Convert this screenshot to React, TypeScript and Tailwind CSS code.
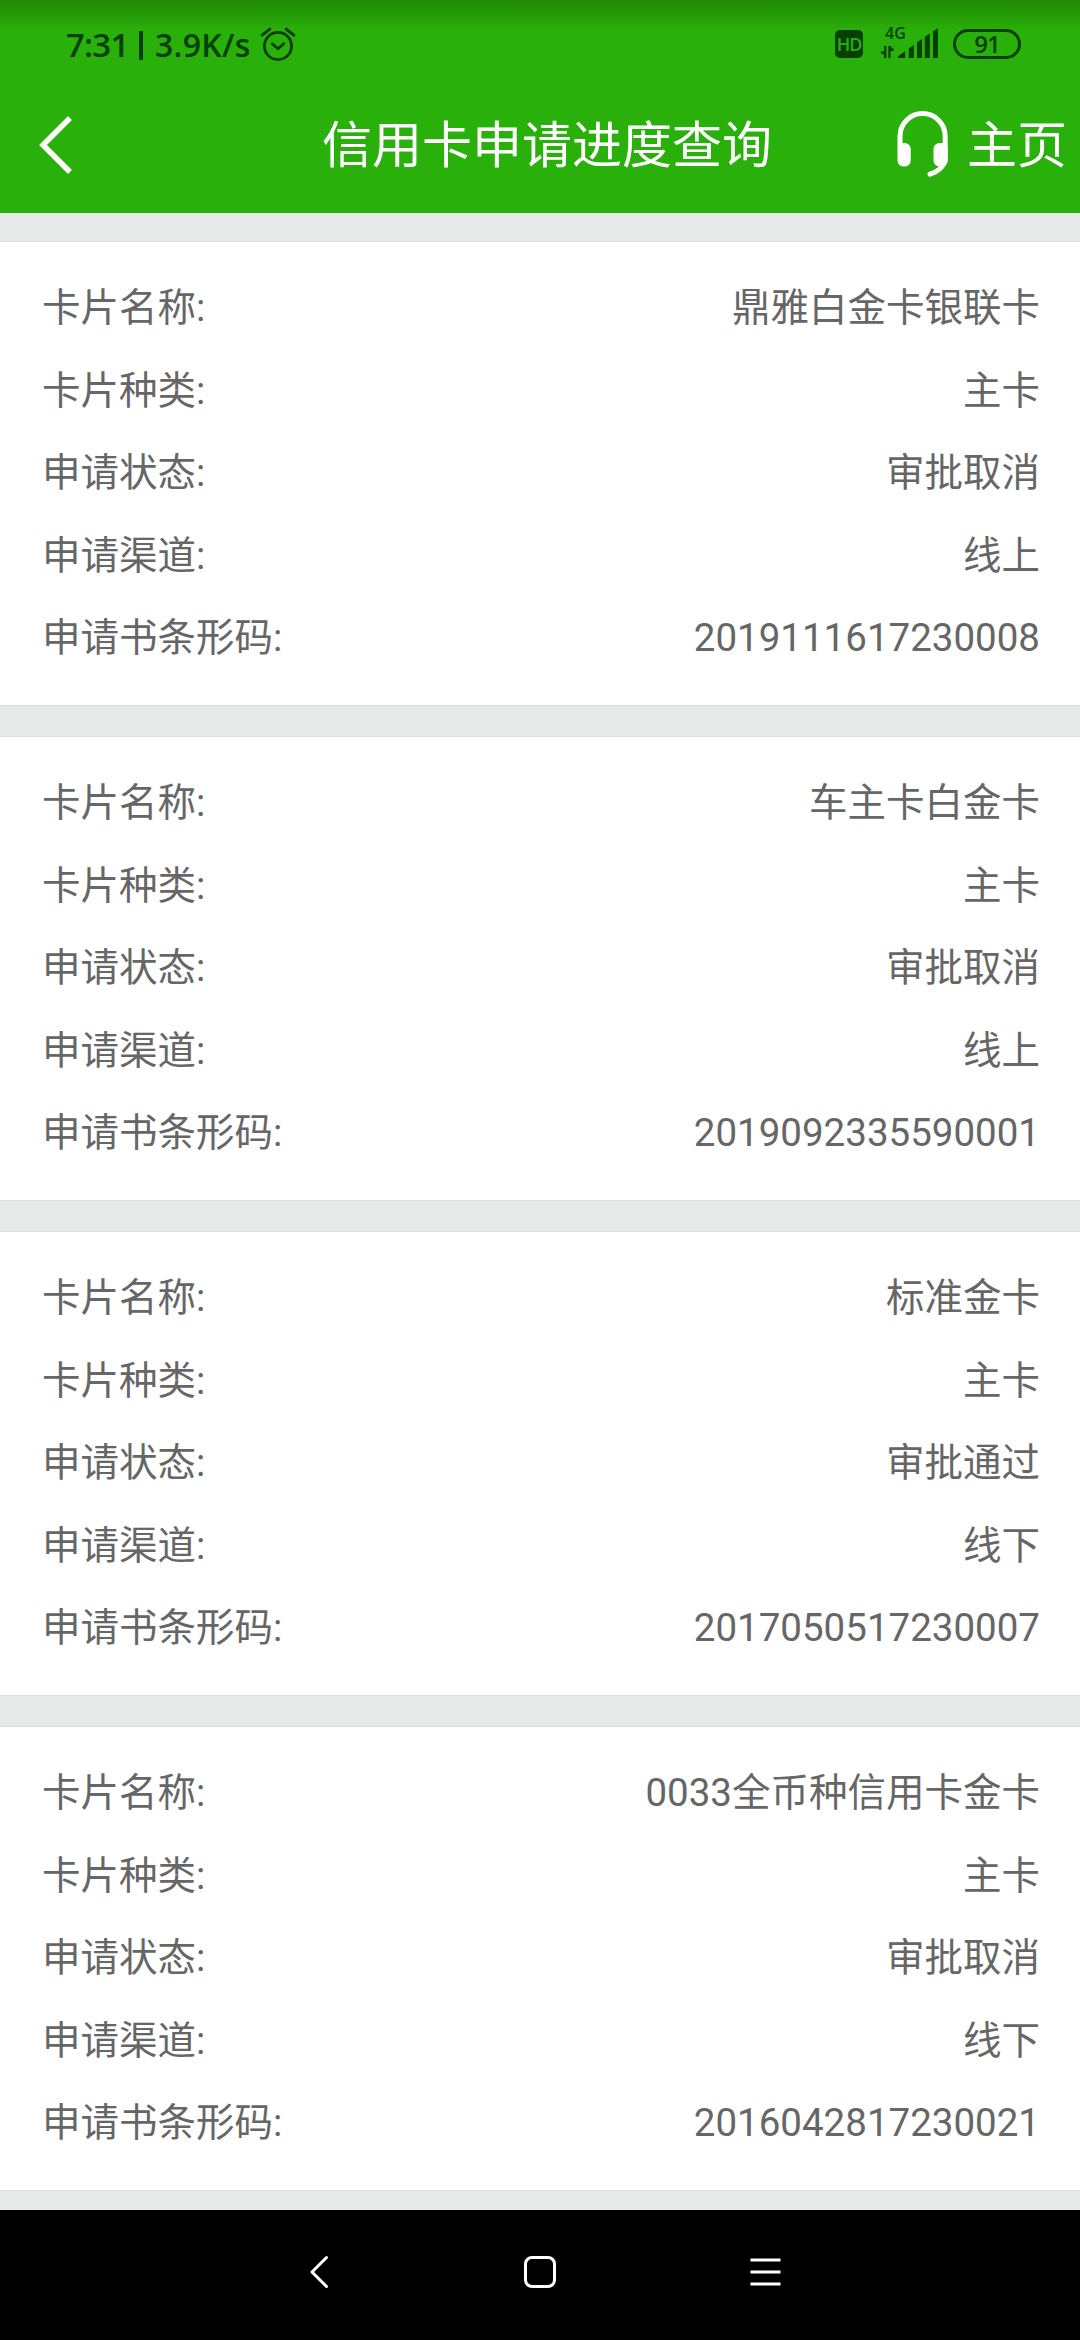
interface Application {
  name: string;
  kind: string;
  status: string;
  channel: string;
  barcode: string;
}

const applications: Application[] = [
  { name: '鼎雅白金卡银联卡', kind: '主卡', status: '审批取消', channel: '线上', barcode: '2019111617230008' },
  { name: '车主卡白金卡', kind: '主卡', status: '审批取消', channel: '线上', barcode: '2019092335590001' },
  { name: '标准金卡', kind: '主卡', status: '审批通过', channel: '线下', barcode: '2017050517230007' },
  { name: '0033全币种信用卡金卡', kind: '主卡', status: '审批取消', channel: '线下', barcode: '2016042817230021' },
];

const fields: { key: keyof Application; label: string }[] = [
  { key: 'name', label: '卡片名称:' },
  { key: 'kind', label: '卡片种类:' },
  { key: 'status', label: '申请状态:' },
  { key: 'channel', label: '申请渠道:' },
  { key: 'barcode', label: '申请书条形码:' },
];

const AlarmIcon = () => (
  <svg width="36" height="36" viewBox="0 0 36 36" fill="none" stroke="currentColor" strokeWidth="2.8" strokeLinecap="round" strokeLinejoin="round">
    <circle cx="18" cy="19" r="13.6" />
    <path d="M12.3 16.7l5.7 5 5.7-5" />
    <path d="M2.2 8.1l7.6-6M33.8 8.1l-7.6-6" strokeWidth="3" />
  </svg>
);

const SignalIcon = () => (
  <svg width="58" height="34" viewBox="0 0 58 34" fill="currentColor">
    <path d="M4.2 19h2.2v12H4.2v-3L.8 26v-1.5h3.4zM8.4 19h1.8l3.6 3.5V24h-3.2v7H8.4z" />
    <path d="M18 29.5l7.2-5.5v7H18z" />
    <path d="M28.8 21.5l5-3.5v13h-5zM37 15.3l5-3.4V31h-5zM44.8 10l5-3.6V31h-5zM53 4.6l5-3.6v30h-5z" />
  </svg>
);

const HeadsetIcon = () => (
  <svg width="52" height="68" viewBox="0 0 52 68" fill="none">
    <path d="M3 38V26.2a22.6 22.6 0 0 1 45.2 0V50c-1.5 6.5-7 11.500-15.200 14.200" stroke="#fff" strokeWidth="5" strokeLinecap="round" strokeLinejoin="round" />
    <rect x=".5" y="33" width="13.2" height="23.4" rx="5.8" fill="#fff" />
    <rect x="36.500" y="33" width="14.2" height="23.4" rx="5.8" fill="#fff" />
  </svg>
);

const StatusBar = () => (
  <div className="flex h-[77px] items-start justify-between bg-linear-to-b from-[#208a05] to-[#2ab00a] to-40% pl-[66px] pr-[59px] text-[#063f02]">
    <div className="mt-[27px] flex h-[36px] items-center font-['Open_Sans'] font-semibold leading-[36px]">
      <span className="w-[73px] text-[33px] tracking-[-0.8px]">7:31</span>
      <span className="h-[29px] w-[4px] bg-[#063f02]" />
      <span className="ml-[12px] w-[105px] text-[32px] tracking-[0.3px]">3.9K/s</span>
      <AlarmIcon />
    </div>
    <div className="mt-[27px] flex items-start font-['Open_Sans'] font-semibold">
      <span className="mt-[3px] flex h-[28px] w-[28px] items-center justify-center rounded-[5px] bg-[#063f02] text-[18px] leading-none tracking-[-1px] text-[#2ab00a]">HD</span>
      <div className="relative ml-[17px]">
        <SignalIcon />
        <span className="absolute left-[5px] top-[-2px] text-[16px] leading-[16px]">4G</span>
      </div>
      <span className="ml-[15px] mt-[2px] flex h-[30px] w-[68px] items-center justify-center rounded-full border-[3px] border-[#063f02] text-[24px] leading-none tracking-[-1px]">91</span>
    </div>
  </div>
);

const TitleBar = () => (
  <header className="flex h-[136px] items-center bg-[#2ab00a] text-[50px] leading-[72px] text-white">
    <svg className="ml-[38px]" width="36" height="60" viewBox="0 0 36 60" fill="none" stroke="#fff" strokeWidth="5.5">
      <path d="M32 3L5 30l27 27" />
    </svg>
    <h1 className="ml-[248px] mt-[2px]">信用卡申请进度查询</h1>
    <div className="mb-[2px] ml-[125px]">
      <HeadsetIcon />
    </div>
    <span className="ml-[18px] mt-[2px]">主页</span>
  </header>
);

const ApplicationCard = ({ application }: { application: Application }) => (
  <section className="h-[465px] shrink-0 border-y border-[#dcdedd] bg-white pl-[42px] pr-[40px] pt-[25px]">
    {fields.map(({ key, label }) => (
      <div key={key} className="flex h-[82.5px] items-center justify-between">
        <span>{label}</span>
        <span>{application[key]}</span>
      </div>
    ))}
  </section>
);

const NavigationBar = () => (
  <nav className="flex h-[130px] shrink-0 items-center justify-between bg-black pl-[309px] pr-[299px] pb-[6px]">
    <svg width="20" height="34" viewBox="0 0 20 34" fill="none" stroke="#fff" strokeWidth="3" strokeLinecap="round" strokeLinejoin="round">
      <path d="M17.5 2.5L3 17l14.5 14.5" />
    </svg>
    <span className="h-[32px] w-[32px] rounded-[8px] border-[3px] border-white" />
    <svg width="31" height="28" viewBox="0 0 31 28" stroke="#fff" strokeWidth="3">
      <path d="M.5 2h30M.5 14h30M.5 26h30" />
    </svg>
  </nav>
);

export default function App() {
  return (
    <div className="flex h-[2340px] w-[1080px] flex-col overflow-hidden bg-[#e8eae9] font-['Roboto','Noto_Sans_CJK_SC',sans-serif]">
      <StatusBar />
      <TitleBar />
      <main className="flex flex-1 flex-col gap-[30px] overflow-hidden border-t border-[#d5f5cf] pt-[27px] text-[38.5px] leading-[56px] text-[#666]">
        {applications.map((application) => (
          <ApplicationCard key={application.barcode} application={application} />
        ))}
      </main>
      <NavigationBar />
    </div>
  );
}
